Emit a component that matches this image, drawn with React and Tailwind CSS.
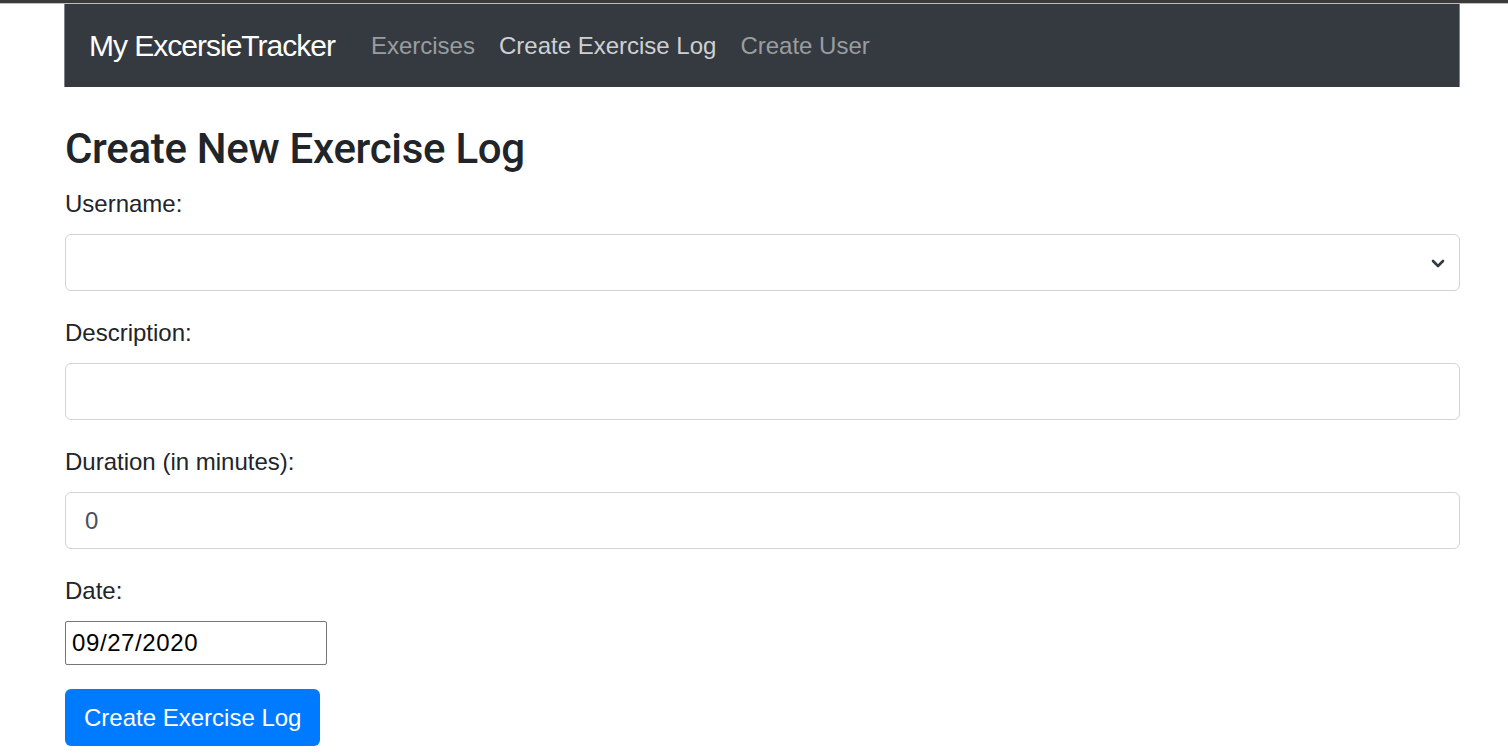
import React from 'react';

const font = { fontFamily: '"Liberation Sans", Arial, sans-serif' };

function Field({ label, children }) {
  return (
    <div className="mb-[24px]">
      <label className="block text-[24px] leading-[36px] mb-[12px] text-[#212529]">{label}</label>
      {children}
    </div>
  );
}

export default function App() {
  return (
    <div className="min-h-[756px] bg-white" style={font}>
      <div className="h-[3px] bg-[#3a3a3a]" />
      <div className="h-[1px] bg-[#bdbdbd]" />
      <nav className="ml-[64px] w-[1396px] h-[83px] bg-[#343a40] flex items-center px-[24px] border-l border-r border-[#7d8288]">
        <span className="text-white text-[30px] tracking-[-1px] mr-[24px]">My ExcersieTracker</span>
        <a className="px-[12px] text-[24px] text-[#9a9da0]">Exercises</a>
        <a className="px-[12px] text-[24px] text-[#cfd0d2]">Create Exercise Log</a>
        <a className="px-[12px] text-[24px] text-[#9a9da0]">Create User</a>
      </nav>
      <div className="ml-[65px] w-[1395px] pt-[37px]">
        <h3 className="text-[42px] leading-[50px] font-medium tracking-[-0.3px] text-[#212529] mb-[12px]" style={{ fontFamily: 'Roboto, "Liberation Sans", sans-serif' }}>
          Create New Exercise Log
        </h3>
        <form>
          <Field label="Username:">
            <div className="h-[57px] border border-[#ced4da] rounded-[6px] flex items-center justify-end pr-[14px]">
              <svg width="14" height="10" viewBox="0 0 14 10">
                <path d="M2 3 L7 8 L12 3" fill="none" stroke="#343a40" strokeWidth="2.6" strokeLinecap="round" strokeLinejoin="round" />
              </svg>
            </div>
          </Field>
          <Field label="Description:">
            <div className="h-[57px] border border-[#ced4da] rounded-[6px]" />
          </Field>
          <Field label="Duration (in minutes):">
            <div className="h-[57px] border border-[#ced4da] rounded-[6px] flex items-center px-[19px] text-[24px] text-[#495057]">0</div>
          </Field>
          <Field label="Date:">
            <div className="w-[262px] h-[44px] border border-[#767676] rounded-[2px] flex items-center px-[6px] text-[24px] tracking-[0.6px] text-black">09/27/2020</div>
          </Field>
          <button type="button" className="h-[57px] px-[19px] bg-[#007bff] text-white text-[24px] rounded-[6px]">Create Exercise Log</button>
        </form>
      </div>
    </div>
  );
}
